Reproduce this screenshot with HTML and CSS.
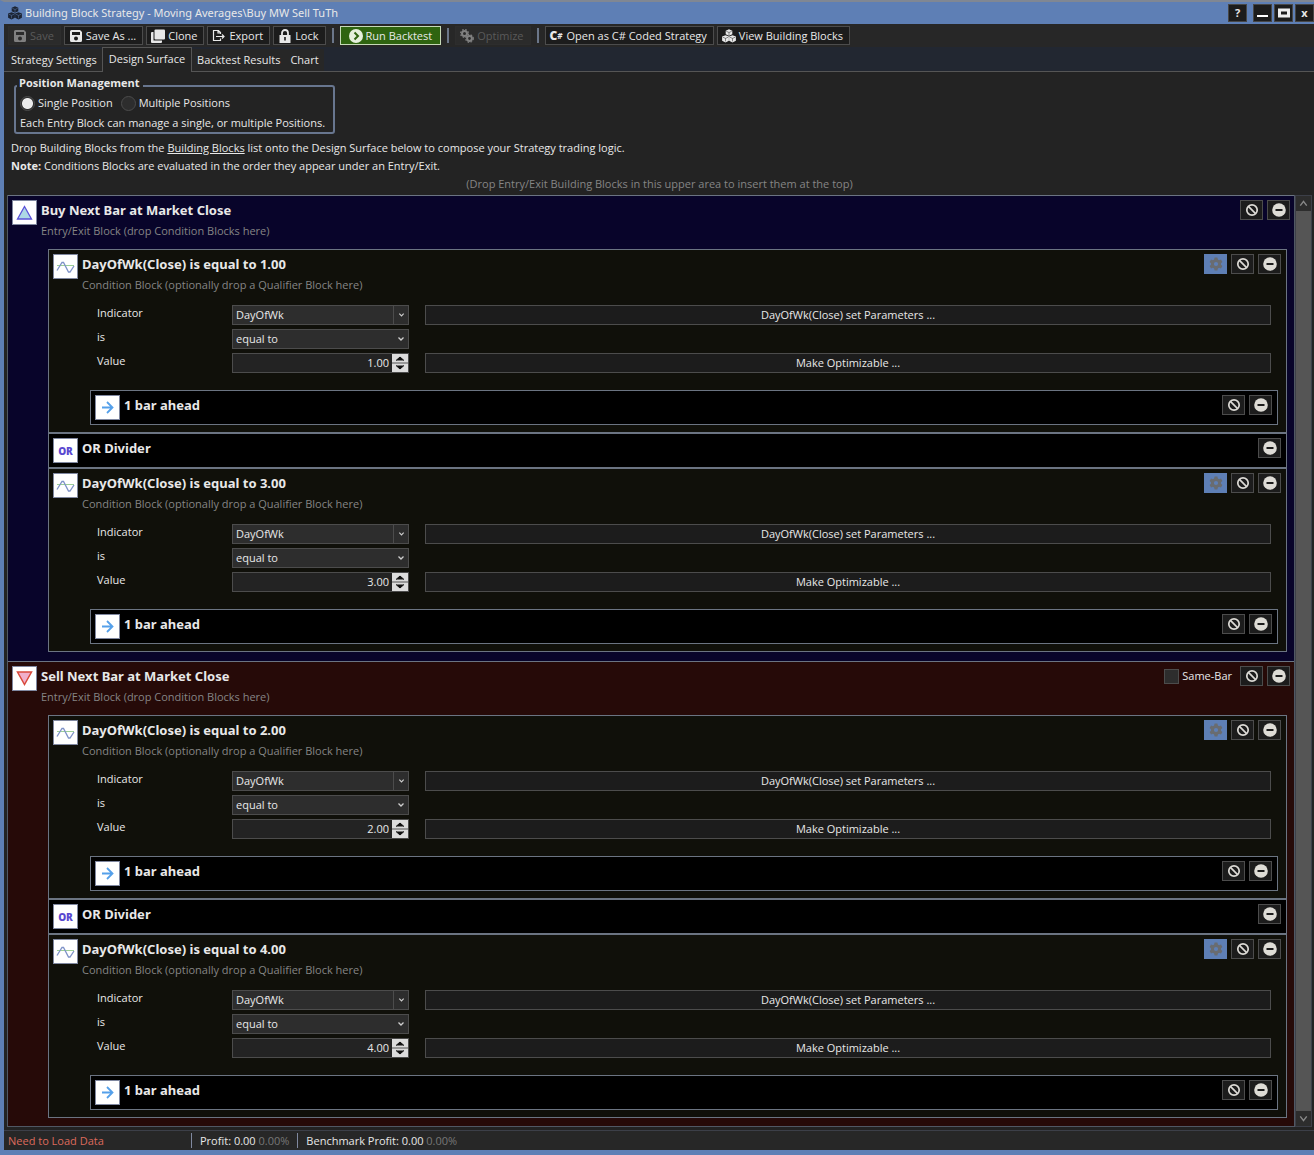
FILE: index.html
```html
<!DOCTYPE html>
<html lang="en">
<head>
<meta charset="utf-8">
<title>Building Block Strategy</title>
<link rel="stylesheet" href="styles.css">
</head>
<body>
<svg class="defs" aria-hidden="true">
  <symbol id="i-ban" viewBox="0 0 14 14"><circle cx="7" cy="7" r="5.2" fill="none" stroke="#dcdad5" stroke-width="1.7"/><path d="M3.4 3.4l7.2 7.2" stroke="#dcdad5" stroke-width="1.7"/></symbol>
  <symbol id="i-minus" viewBox="0 0 14 14"><circle cx="7" cy="7" r="6.8" fill="#dedcd6"/><path d="M3.5 7h7" stroke="#1c1c1c" stroke-width="2"/></symbol>
  <symbol id="i-gear" viewBox="0 0 14 14"><path fill="#696c70" fill-rule="evenodd" d="M5.6.6h2.8l.5 1.9 1.2.7 1.9-.6 1.4 2.4L12 6.3v1.4L13.4 9 12 11.4l-1.9-.6-1.2.7-.5 1.9H5.6l-.5-1.9-1.2-.7-1.9.6L.6 9 2 7.7V6.3L.6 5 2 2.600l1.900.6 1.200-.7zM7 4.900a2.100 2.100 0 1 0 0 4.200 2.100 2.100 0 0 0 0-4.200z"/></symbol>
  <symbol id="i-wave" viewBox="0 0 23 23"><path d="M3 10.500h17" stroke="#9ccf96" stroke-width="1"/><path d="M3 15.500L8 7.500h1.500L14.500 17h1.500l4-6" fill="none" stroke="#7f93c8" stroke-width="1.300"/></symbol>
  <symbol id="i-arrow" viewBox="0 0 23 23"><path d="M6 11.500h10.500M11 6l5.500 5.500L11 17" fill="none" stroke="#55a0ea" stroke-width="1.800"/></symbol>
  <symbol id="i-up" viewBox="0 0 23 23"><path d="M11.500 5.500L18.500 18h-14z" fill="#add8e6" stroke="#5a50d8" stroke-width="1.300"/></symbol>
  <symbol id="i-down" viewBox="0 0 23 23"><path d="M4.500 5h14l-7 12.500z" fill="#f0b0cc" stroke="#d94a3c" stroke-width="1.500"/></symbol>
  <symbol id="i-chev" viewBox="0 0 8 8"><path d="M1.500 2.500L4 5l2.500-2.500" fill="none" stroke="#cfcfcf" stroke-width="1.300"/></symbol>
  <symbol id="i-cubes" viewBox="0 0 14 14"><path d="M7 .3l3.300 1.400v3.600L7 6.800 3.700 5.300V1.700zM3.500 6.200L6.900 7.600v4.200l-3.400 1.600L.1 11.800V7.600zM10.500 6.200l3.400 1.400v4.200l-3.400 1.600-3.400-1.600V7.600z" fill="currentColor"/><path d="M4.300 2.300L7 3.500l2.700-1.200M7 3.500v3M.8 8.200l2.700 1.200 2.700-1.200M3.500 9.400v3M7.800 8.200l2.700 1.200 2.700-1.200M10.500 9.400v3" stroke="var(--cut)" stroke-width=".5" fill="none"/></symbol>
  <symbol id="i-disk" viewBox="0 0 14 14"><path fill="currentColor" fill-rule="evenodd" d="M1 2.500A1.500 1.500 0 0 1 2.500 1H11l2 2v8.500a1.500 1.500 0 0 1-1.500 1.500h-9A1.500 1.500 0 0 1 1 11.500zM3 3v3h8V3zM7 7.500a2 2 0 1 0 0 4 2 2 0 0 0 0-4z"/></symbol>
</svg>
<div class="window">
  <header class="titlebar">
    <svg class="icon dark-cubes"><use href="#i-cubes"/></svg>
    <h1>Building Block Strategy - Moving Averages\Buy MW Sell TuTh</h1>
    <button class="winbtn help" aria-label="Help">?</button>
    <button class="winbtn" aria-label="Minimize"><svg viewBox="0 0 17 16"><path d="M3 11h11" stroke="#fff" stroke-width="2"/></svg></button>
    <button class="winbtn" aria-label="Maximize"><svg viewBox="0 0 17 16"><path d="M4.500 5h9v6h-9z" fill="none" stroke="#eee" stroke-width="3"/></svg></button>
    <button class="winbtn" aria-label="Close">x</button>
  </header>
  <div class="toolbar">
    <button class="tool" disabled><svg class="icon"><use href="#i-disk"/></svg>Save</button>
    <button class="tool"><svg class="icon"><use href="#i-disk"/></svg>Save As ...</button>
    <button class="tool"><svg class="icon" viewBox="0 0 14 14"><rect x="3.500" y="0.500" width="10.500" height="10" rx="1" fill="currentColor"/><path d="M2.500 3v8.500H11V13a1 1 0 0 1-1 1H1a1 1 0 0 1-1-1V4a1 1 0 0 1 1-1z" fill="currentColor"/></svg>Clone</button>
    <button class="tool"><svg class="icon" viewBox="0 0 14 14"><path d="M8.500 5V3.500L6.500 1.500H1.500v10h7V9.500M6 1.500V4h2.500M4 7.500h8M10 5.500l2 2-2 2" fill="none" stroke="currentColor" stroke-width="1.200"/></svg>Export</button>
    <button class="tool"><svg class="icon" viewBox="0 0 14 14"><path d="M4 6V4a3 3 0 0 1 6 0v2" fill="none" stroke="currentColor" stroke-width="1.800"/><path fill="currentColor" fill-rule="evenodd" d="M1.500 6h11v8h-11zM6.200 8v3.500h1.600V8z"/></svg>Lock</button>
    <span class="sep"></span>
    <button class="tool run"><svg class="icon" viewBox="0 0 14 14"><circle cx="7" cy="7" r="7" fill="#e6f0dc"/><path d="M5.500 3.500L9 7l-3.500 3.500" fill="none" stroke="#2f6410" stroke-width="2"/></svg>Run Backtest</button>
    <span class="sep"></span>
    <button class="tool" disabled><svg class="icon" viewBox="0 0 14 14"><g fill="none" stroke="currentColor"><circle cx="4.500" cy="4.500" r="2.500" stroke-width="2"/><circle cx="4.500" cy="4.500" r="3.900" stroke-width="1.200" stroke-dasharray="1.600 1.500"/><circle cx="9.500" cy="9.500" r="2.400" stroke-width="2"/><circle cx="9.500" cy="9.500" r="3.800" stroke-width="1.200" stroke-dasharray="1.600 1.500"/></g></svg>Optimize</button>
    <span class="sep"></span>
    <button class="tool"><span class="csharp"><b>C</b><i>#</i></span>Open as C# Coded Strategy</button>
    <button class="tool"><svg class="icon"><use href="#i-cubes"/></svg>View Building Blocks</button>
  </div>
  <nav class="tabs">
    <a href="#settings">Strategy Settings</a>
    <a href="#design" class="active" aria-current="page">Design Surface</a>
    <a href="#results">Backtest Results</a>
    <a href="#chart">Chart</a>
  </nav>
  <main class="surface">
    <fieldset class="positions">
      <legend>Position Management</legend>
      <div class="radios">
        <label><input type="radio" name="pos" checked>Single Position</label>
        <label><input type="radio" name="pos">Multiple Positions</label>
      </div>
      <p>Each Entry Block can manage a single, or multiple Positions.</p>
    </fieldset>
    <p class="intro">Drop Building Blocks from the <a href="#blocks">Building Blocks</a> list onto the Design Surface below to compose your Strategy trading logic.</p>
    <p class="intro"><b>Note:</b> Conditions Blocks are evaluated in the order they appear under an Entry/Exit.</p>
    <p class="hint">(Drop Entry/Exit Building Blocks in this upper area to insert them at the top)</p>
    <div class="list">
      <div class="blocks">
        <section class="entry buy">
          <div class="head">
            <span class="tile"><svg><use href="#i-up"/></svg></span>
            <div class="titles"><h2>Buy Next Bar at Market Close</h2><p>Entry/Exit Block (drop Condition Blocks here)</p></div>
            <button class="mini" aria-label="Disable"><svg><use href="#i-ban"/></svg></button>
            <button class="mini" aria-label="Remove"><svg><use href="#i-minus"/></svg></button>
          </div>
          <section class="cond">
            <div class="head">
              <span class="tile"><svg><use href="#i-wave"/></svg></span>
              <div class="titles"><h3>DayOfWk(Close) is equal to 1.00</h3><p>Condition Block (optionally drop a Qualifier Block here)</p></div>
              <button class="mini on" aria-label="Settings"><svg><use href="#i-gear"/></svg></button>
              <button class="mini" aria-label="Disable"><svg><use href="#i-ban"/></svg></button>
              <button class="mini" aria-label="Remove"><svg><use href="#i-minus"/></svg></button>
            </div>
            <div class="params">
              <label for="ind1">Indicator</label>
              <span class="combo split"><select id="ind1"><option>DayOfWk</option></select><svg><use href="#i-chev"/></svg></span>
              <button class="wide">DayOfWk(Close) set Parameters ...</button>
              <label for="op1">is</label>
              <span class="combo"><select id="op1"><option>equal to</option></select><svg><use href="#i-chev"/></svg></span>
              <span></span>
              <label for="val1">Value</label>
              <span class="spin"><input id="val1" type="text" value="1.00"><svg viewBox="0 0 16 18"><path d="M0 0h16v18H0z" fill="#dcdcdc"/><path d="M0 9h16" stroke="#555"/><path d="M4 6.500L8 3l4 3.500M4 11.500L8 15l4-3.500" fill="#111" stroke="#111"/></svg></span>
              <button class="wide">Make Optimizable ...</button>
            </div>
            <div class="head qual">
              <span class="tile"><svg><use href="#i-arrow"/></svg></span>
              <div class="titles"><h4>1 bar ahead</h4></div>
              <button class="mini" aria-label="Disable"><svg><use href="#i-ban"/></svg></button>
              <button class="mini" aria-label="Remove"><svg><use href="#i-minus"/></svg></button>
            </div>
          </section>
          <div class="head divider">
            <span class="tile or">OR</span>
            <div class="titles"><h3>OR Divider</h3></div>
            <button class="mini" aria-label="Remove"><svg><use href="#i-minus"/></svg></button>
          </div>
          <section class="cond">
            <div class="head">
              <span class="tile"><svg><use href="#i-wave"/></svg></span>
              <div class="titles"><h3>DayOfWk(Close) is equal to 3.00</h3><p>Condition Block (optionally drop a Qualifier Block here)</p></div>
              <button class="mini on" aria-label="Settings"><svg><use href="#i-gear"/></svg></button>
              <button class="mini" aria-label="Disable"><svg><use href="#i-ban"/></svg></button>
              <button class="mini" aria-label="Remove"><svg><use href="#i-minus"/></svg></button>
            </div>
            <div class="params">
              <label for="ind2">Indicator</label>
              <span class="combo split"><select id="ind2"><option>DayOfWk</option></select><svg><use href="#i-chev"/></svg></span>
              <button class="wide">DayOfWk(Close) set Parameters ...</button>
              <label for="op2">is</label>
              <span class="combo"><select id="op2"><option>equal to</option></select><svg><use href="#i-chev"/></svg></span>
              <span></span>
              <label for="val2">Value</label>
              <span class="spin"><input id="val2" type="text" value="3.00"><svg viewBox="0 0 16 18"><path d="M0 0h16v18H0z" fill="#dcdcdc"/><path d="M0 9h16" stroke="#555"/><path d="M4 6.500L8 3l4 3.500M4 11.500L8 15l4-3.500" fill="#111" stroke="#111"/></svg></span>
              <button class="wide">Make Optimizable ...</button>
            </div>
            <div class="head qual">
              <span class="tile"><svg><use href="#i-arrow"/></svg></span>
              <div class="titles"><h4>1 bar ahead</h4></div>
              <button class="mini" aria-label="Disable"><svg><use href="#i-ban"/></svg></button>
              <button class="mini" aria-label="Remove"><svg><use href="#i-minus"/></svg></button>
            </div>
          </section>
        </section>
        <section class="entry sell">
          <div class="head">
            <span class="tile"><svg><use href="#i-down"/></svg></span>
            <div class="titles"><h2>Sell Next Bar at Market Close</h2><p>Entry/Exit Block (drop Condition Blocks here)</p></div>
            <label class="samebar"><input type="checkbox">Same-Bar</label>
            <button class="mini" aria-label="Disable"><svg><use href="#i-ban"/></svg></button>
            <button class="mini" aria-label="Remove"><svg><use href="#i-minus"/></svg></button>
          </div>
          <section class="cond">
            <div class="head">
              <span class="tile"><svg><use href="#i-wave"/></svg></span>
              <div class="titles"><h3>DayOfWk(Close) is equal to 2.00</h3><p>Condition Block (optionally drop a Qualifier Block here)</p></div>
              <button class="mini on" aria-label="Settings"><svg><use href="#i-gear"/></svg></button>
              <button class="mini" aria-label="Disable"><svg><use href="#i-ban"/></svg></button>
              <button class="mini" aria-label="Remove"><svg><use href="#i-minus"/></svg></button>
            </div>
            <div class="params">
              <label for="ind3">Indicator</label>
              <span class="combo split"><select id="ind3"><option>DayOfWk</option></select><svg><use href="#i-chev"/></svg></span>
              <button class="wide">DayOfWk(Close) set Parameters ...</button>
              <label for="op3">is</label>
              <span class="combo"><select id="op3"><option>equal to</option></select><svg><use href="#i-chev"/></svg></span>
              <span></span>
              <label for="val3">Value</label>
              <span class="spin"><input id="val3" type="text" value="2.00"><svg viewBox="0 0 16 18"><path d="M0 0h16v18H0z" fill="#dcdcdc"/><path d="M0 9h16" stroke="#555"/><path d="M4 6.500L8 3l4 3.500M4 11.500L8 15l4-3.500" fill="#111" stroke="#111"/></svg></span>
              <button class="wide">Make Optimizable ...</button>
            </div>
            <div class="head qual">
              <span class="tile"><svg><use href="#i-arrow"/></svg></span>
              <div class="titles"><h4>1 bar ahead</h4></div>
              <button class="mini" aria-label="Disable"><svg><use href="#i-ban"/></svg></button>
              <button class="mini" aria-label="Remove"><svg><use href="#i-minus"/></svg></button>
            </div>
          </section>
          <div class="head divider">
            <span class="tile or">OR</span>
            <div class="titles"><h3>OR Divider</h3></div>
            <button class="mini" aria-label="Remove"><svg><use href="#i-minus"/></svg></button>
          </div>
          <section class="cond">
            <div class="head">
              <span class="tile"><svg><use href="#i-wave"/></svg></span>
              <div class="titles"><h3>DayOfWk(Close) is equal to 4.00</h3><p>Condition Block (optionally drop a Qualifier Block here)</p></div>
              <button class="mini on" aria-label="Settings"><svg><use href="#i-gear"/></svg></button>
              <button class="mini" aria-label="Disable"><svg><use href="#i-ban"/></svg></button>
              <button class="mini" aria-label="Remove"><svg><use href="#i-minus"/></svg></button>
            </div>
            <div class="params">
              <label for="ind4">Indicator</label>
              <span class="combo split"><select id="ind4"><option>DayOfWk</option></select><svg><use href="#i-chev"/></svg></span>
              <button class="wide">DayOfWk(Close) set Parameters ...</button>
              <label for="op4">is</label>
              <span class="combo"><select id="op4"><option>equal to</option></select><svg><use href="#i-chev"/></svg></span>
              <span></span>
              <label for="val4">Value</label>
              <span class="spin"><input id="val4" type="text" value="4.00"><svg viewBox="0 0 16 18"><path d="M0 0h16v18H0z" fill="#dcdcdc"/><path d="M0 9h16" stroke="#555"/><path d="M4 6.500L8 3l4 3.500M4 11.500L8 15l4-3.500" fill="#111" stroke="#111"/></svg></span>
              <button class="wide">Make Optimizable ...</button>
            </div>
            <div class="head qual">
              <span class="tile"><svg><use href="#i-arrow"/></svg></span>
              <div class="titles"><h4>1 bar ahead</h4></div>
              <button class="mini" aria-label="Disable"><svg><use href="#i-ban"/></svg></button>
              <button class="mini" aria-label="Remove"><svg><use href="#i-minus"/></svg></button>
            </div>
          </section>
        </section>
      </div>
      <div class="scroll">
        <button aria-label="Scroll up"><svg viewBox="0 0 14 14"><path d="M4 9l3-4 3 4" fill="none" stroke="#8a8a8a" stroke-width="1.300"/></svg></button>
        <button aria-label="Scroll down"><svg viewBox="0 0 14 14"><path d="M4 5l3 4 3-4" fill="none" stroke="#8a8a8a" stroke-width="1.300"/></svg></button>
      </div>
    </div>
  </main>
  <footer class="status">
    <span class="warn">Need to Load Data</span>
    <span class="stat">Profit: 0.00 <em>0.00%</em></span>
    <span class="stat">Benchmark Profit: 0.00 <em>0.00%</em></span>
  </footer>
</div>
</body>
</html>
```
FILE: styles.css
```css
* { box-sizing: border-box; }
body {
  margin: 0;
  background: #5e7fb5;
  color: #e8e8e8;
  font: 11px/18px "Open Sans", "Noto Sans", sans-serif;
}
h1, h2, h3, h4, p { margin: 0; font-size: inherit; font-weight: normal; }
button, input, select { font: inherit; color: inherit; margin: 0; border-radius: 0; }
a { color: inherit; }
svg { display: block; flex: none; }
.defs { display: none; }

.window {
  min-height: 100vh;
  display: flex;
  flex-direction: column;
  border-left: 4px solid #5e7fb5;
  border-top: 2px solid #808793;
  border-bottom: 6px solid #5e7fb5;
  background: #232323;
}

.titlebar {
  display: flex;
  align-items: center;
  height: 22px;
  padding-left: 4px;
  background: #5e7fb5;
}
.titlebar h1 { flex: 1; padding-left: 3px; font-family: "Noto Sans", sans-serif; }
.icon { width: 14px; height: 14px; --cut: #1c1c1c; }
.dark-cubes { color: #1c2433; --cut: #5e7fb5; }
.winbtn {
  width: 19px;
  height: 18px;
  margin-left: 2px;
  padding: 0;
  background: #1c1c1c;
  border: 1px solid #474747;
  font-weight: bold;
  line-height: 14px;
}
.winbtn.help { margin-right: 4px; }

.toolbar {
  display: flex;
  align-items: center;
  gap: 3px;
  height: 23px;
  padding: 0 4px;
  background: #272727;
}
.tool {
  display: flex;
  align-items: center;
  gap: 3px;
  height: 19px;
  padding: 0 6px 0 4px;
  background: #1c1c1c;
  border: 1px solid #4c4c4c;
  white-space: nowrap;
}
.tool:disabled { background: #2b2b2b; border-color: #2d2d2d; color: #5a5a5a; }
.tool:disabled .icon { color: #808080; }
.tool.run { padding: 0 8px; background: #2f6410; border-color: #c6d9b8; }
.sep { width: 2px; height: 15px; margin: 0 3px; background: #6b7689; }
.csharp { display: flex; align-items: center; width: 14px; }
.csharp b { font-size: 12px; font-weight: 900; }
.csharp i { font-size: 8px; font-weight: bold; }

.tabs {
  display: flex;
  align-items: flex-end;
  height: 25px;
  padding-left: 2px;
  background: #222731;
  border-bottom: 1px solid #555;
}
.tabs a {
  height: 22px;
  padding: 0 5px;
  background: #272727;
  line-height: 22px;
  text-decoration: none;
}
.tabs .active {
  height: 25px;
  margin-bottom: -1px;
  padding: 0 6px;
  background: #232323;
  border: 1px solid #555;
  border-bottom: 0;
}

.surface { flex: 1; display: flex; flex-direction: column; padding: 4px 2px 3px 3px; }
.positions {
  width: 321px;
  margin: 0 0 5px 7px;
  padding: 0 4px;
  border: 2px solid #68768f;
  border-radius: 3px;
  white-space: nowrap;
}
.positions legend { height: 20px; margin-left: -3px; padding: 0 4px 6px 2px; line-height: 14px; font-weight: bold; }
.radios { display: flex; gap: 8px; height: 18px; margin-top: -2px; }
.positions p { margin-top: 2px; }
.radios label, .samebar { display: flex; align-items: center; gap: 3px; }
.radios input, .samebar input {
  appearance: none;
  width: 15px;
  height: 15px;
  border: 1px solid #4c4c4c;
  border-radius: 50%;
  background: #2d2d2d;
}
.radios input:checked { background: radial-gradient(#ececec 0 5px, #2d2d2d 6px); }
.samebar { height: 20px; margin-right: 4px; }
.samebar input { border-radius: 0; }
.intro { padding-left: 4px; }
.hint { color: #858585; text-align: center; }

.list { flex: 1; display: flex; margin-top: 2px; }
.blocks { flex: 1; display: flex; flex-direction: column; border: 1px solid #505864; border-top: 0; }
.entry { padding: 0 7px 9px 40px; border-top: 1px solid #6b7482; }
.buy { background: #08042a; }
.sell { background: #260a08; flex: 1; padding-bottom: 8px; }
.head { display: flex; align-items: flex-start; gap: 4px; }
.entry > .head:first-child { height: 53px; margin: 0 -3px 0 -40px; padding: 4px 0 0 4px; }
.titles { flex: 1; }
.titles h2, .titles h3, .titles h4 { font: bold 13px/20px "Noto Sans", sans-serif; }
.titles p { color: #858585; line-height: 22px; }
.tile {
  display: flex;
  align-items: center;
  justify-content: center;
  width: 25px;
  height: 25px;
  border: 1px solid #8088a0;
  background: #fff;
}
.tile svg { width: 23px; height: 23px; }
.tile.or { color: #5a48d0; font-size: 10px; font-weight: 900; }
.mini {
  display: flex;
  align-items: center;
  justify-content: center;
  width: 23px;
  height: 20px;
  padding: 0;
  background: #1c1c1c;
  border: 1px solid #4c4c4c;
}
.mini svg { width: 14px; height: 14px; }
.mini.on { background: #5e7fb5; border-color: #5e7fb5; }

.cond {
  height: 184px;
  padding: 4px 5px 0 4px;
  background: #10100a;
  border: 1px solid #6b7482;
}
.params {
  display: grid;
  grid-template-columns: 135px 177px 1fr;
  grid-auto-rows: 20px;
  row-gap: 4px;
  margin: 9px 10px 17px 44px;
}
.params label { line-height: 16px; }
.combo, .spin {
  display: flex;
  align-items: center;
  border: 1px solid #4c4c4c;
  background: #2d2d2d;
}
.combo select {
  flex: 1;
  height: 18px;
  padding: 0 3px;
  appearance: none;
  border: 0;
  background: none;
}
.combo svg { width: 8px; height: 8px; margin: 0 3px 0 4px; }
.split svg { width: 15px; height: 18px; margin: 0; padding: 5px 3px 5px 4px; border-left: 1px solid #4c4c4c; }
.spin { background: #232323; }
.spin input { flex: 1; min-width: 0; height: 18px; padding: 0 3px; border: 0; background: none; text-align: right; }
.spin svg { width: 16px; height: 18px; }
.wide { margin-left: 16px; padding: 0; background: #1c1c1c; border: 1px solid #4c4c4c; line-height: 16px; }
.qual, .divider { height: 35px; padding: 4px 5px 4px 4px; border: 1px solid #6b7482; background: #000; }
.qual { margin: 0 3px 0 37px; }

.scroll {
  display: flex;
  flex-direction: column;
  justify-content: space-between;
  width: 17px;
  border: 1px solid #3c3f48;
  background: #555;
}
.scroll button { height: 15px; padding: 0; background: #2d2d2d; border: 0; }
.scroll svg { width: 15px; height: 15px; }

.status {
  display: flex;
  height: 20px;
  padding: 0 4px;
  align-items: center;
  background: #272727;
  border-top: 1px solid #3c3f48;
}
.status .warn { width: 183px; color: #dc6a5c; }
.stat { height: 15px; margin-right: 8px; padding-left: 8px; border-left: 1px solid #8089a0; line-height: 15px; }
.stat em { color: #777; font-style: normal; }
```
